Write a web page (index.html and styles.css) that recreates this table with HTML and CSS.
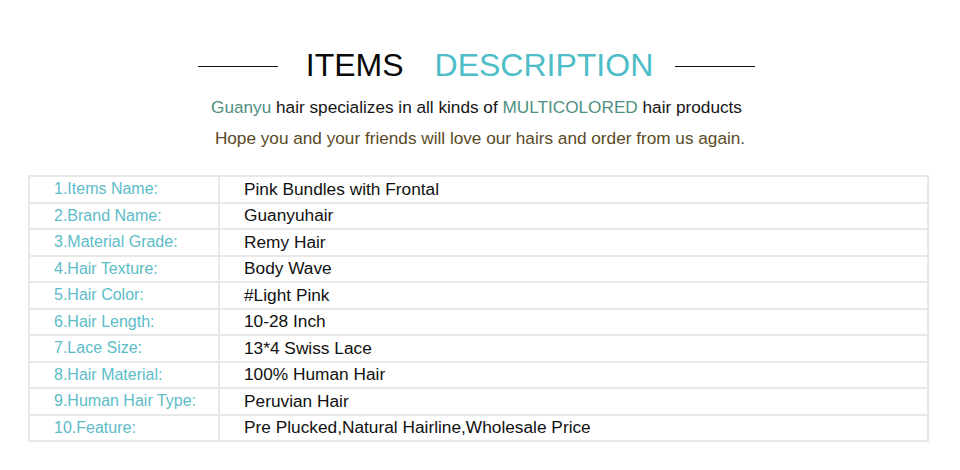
FILE: index.html
```html
<!DOCTYPE html>
<html lang="en">
<head>
<meta charset="utf-8">
<title>Items Description</title>
<link rel="stylesheet" href="styles.css">
</head>
<body>
<div class="page">
  <div class="heading">
    <span class="rule"></span>
    <h1 class="title"><span class="dark">ITEMS</span><span class="accent">DESCRIPTION</span></h1>
    <span class="rule"></span>
  </div>
  <p class="intro intro-1"><span class="brand">Guanyu</span> hair specializes in all kinds of <span class="brand">MULTICOLORED</span> hair products</p>
  <p class="intro intro-2">Hope you and your friends will love our hairs and order from us again.</p>
  <table class="specs">
    <tr><td class="label">1.Items Name:</td><td class="value">Pink Bundles with Frontal</td></tr>
    <tr><td class="label">2.Brand Name:</td><td class="value">Guanyuhair</td></tr>
    <tr><td class="label">3.Material Grade:</td><td class="value">Remy Hair</td></tr>
    <tr><td class="label">4.Hair Texture:</td><td class="value">Body Wave</td></tr>
    <tr><td class="label">5.Hair Color:</td><td class="value">#Light Pink</td></tr>
    <tr><td class="label">6.Hair Length:</td><td class="value">10-28 Inch</td></tr>
    <tr><td class="label">7.Lace Size:</td><td class="value">13*4 Swiss Lace</td></tr>
    <tr><td class="label">8.Hair Material:</td><td class="value">100% Human Hair</td></tr>
    <tr><td class="label">9.Human Hair Type:</td><td class="value">Peruvian Hair</td></tr>
    <tr><td class="label">10.Feature:</td><td class="value">Pre Plucked,Natural Hairline,Wholesale Price</td></tr>
  </table>
</div>
</body>
</html>
```

FILE: styles.css
```css
html, body {
  margin: 0;
  padding: 0;
  background: #ffffff;
}

body {
  font-family: "Liberation Sans", Arial, sans-serif;
  color: #111111;
}

.page {
  width: 960px;
  height: 470px;
  padding-top: 45px;
  box-sizing: border-box;
}

.heading {
  display: flex;
  align-items: center;
  justify-content: center;
  height: 40px;
  padding-right: 7px;
}

.rule {
  display: block;
  width: 80px;
  height: 1px;
  background: #111111;
  margin-top: 2px;
}

.title {
  margin: 0 22px 0 28px;
  font-size: 32px;
  font-weight: normal;
  line-height: 40px;
  display: flex;
  gap: 31px;
}

.dark {
  color: #0a0a0a;
}

.accent {
  color: #4dbdc7;
}

.intro {
  margin: 0;
  font-size: 17.2px;
  line-height: 31px;
  text-align: center;
}

.intro-1 {
  margin-top: 7px;
  color: #151515;
  padding-right: 7px;
}

.intro-2 {
  color: #5a4a27;
}

.brand {
  color: #4f8f80;
}

.specs {
  margin: 21px 0 0 28px;
  width: 901px;
  border-collapse: collapse;
  border: 2px solid #e6e6e6;
}

.specs td {
  border: 2px solid #e8e8e8;
  height: 24.5px;
  padding: 0;
  vertical-align: middle;
  white-space: nowrap;
}

.label {
  width: 164px;
  padding-left: 24px !important;
  font-size: 16px;
  color: #5cbcc8;
}

.value {
  padding-left: 24px !important;
  font-size: 17.3px;
  color: #111111;
}
```
